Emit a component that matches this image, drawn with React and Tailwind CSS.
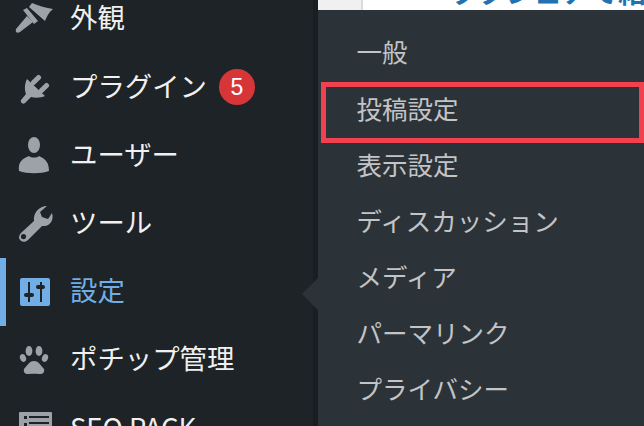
const items = [
  { label: "外観", icon: "brush" },
  { label: "プラグイン", icon: "plug", badge: "5" },
  { label: "ユーザー", icon: "user" },
  { label: "ツール", icon: "wrench" },
  { label: "設定", icon: "settings", active: true },
  { label: "ポチップ管理", icon: "paw" },
  { label: "SEO PACK", icon: "seo" },
];
const sub = ["一般", "投稿設定", "表示設定", "ディスカッション", "メディア", "パーマリンク", "プライバシー"];

function Icon({ name }) {
  const c = "#9ca2a7";
  const common = { width: 40, height: 40, viewBox: "0 0 40 40" };
  if (name === "brush")
    return (
      <svg {...common}>
        <path fill={c} d="M15 8 L18 4 C25 7 32 9 39 10 C35 13 33 17 31 22 Z" />
        <path fill={c} d="M9 11 L13 9 L24 22 L20 25 Z" />
        <path fill={c} d="M13 17 L19 23 L6 33 C3 35 1 33 2 30 Z" />
      </svg>
    );
  if (name === "plug")
    return (
      <svg {...common}>
        <path fill={c} d="M13 12 L31 29 C27 31 21 31 17 30 L11 36 C9 38 6 35 7 33 L12 27 C10 22 11 16 13 12 Z" />
        <rect x="-2.5" y="-6" width="5" height="12" rx="2" fill={c} transform="translate(22 13) rotate(45)" />
        <rect x="-2.5" y="-6" width="5" height="12" rx="2" fill={c} transform="translate(30 21) rotate(45)" />
      </svg>
    );
  if (name === "user")
    return (
      <svg {...common}>
        <ellipse cx="20" cy="10" rx="6" ry="8" fill={c} />
        <path fill={c} d="M5 36 C4 28 7 24 15 21 C17 23 23 23 25 21 C32 24 35 28 35 36 C27 39 13 39 5 36 Z" />
      </svg>
    );
  if (name === "wrench")
    return (
      <svg {...common}>
        <path fill={c} fillRule="evenodd" d="M33 2 L26 8 L28 13 L34 15 L38 9 C40 15 37 21 31 22 L28 22 L14 36 C11 39 6 38 5 34 C5 31 6 30 8 28 L20 17 C19 9 25 2 33 2 Z M9.5 30 A2.6 2.6 0 1 0 9.5 35.2 A2.6 2.6 0 1 0 9.5 30 Z" />
      </svg>
    );
  if (name === "settings")
    return (
      <svg {...common}>
        <rect x="6" y="6" width="30" height="28" rx="2" fill="#72aee6" />
        <g fill="#1d2327">
          <rect x="14" y="10" width="2" height="20" />
          <rect x="10" y="21" width="10" height="4" rx="2" />
          <rect x="26" y="10" width="2" height="20" />
          <rect x="22" y="13" width="9" height="4" rx="2" />
        </g>
      </svg>
    );
  if (name === "paw")
    return (
      <svg {...common}>
        <g fill={c}>
          <ellipse cx="9" cy="18" rx="3" ry="4" transform="rotate(-20 9 18)" />
          <ellipse cx="15" cy="11" rx="3.4" ry="5" />
          <ellipse cx="25" cy="11" rx="3.4" ry="5" />
          <ellipse cx="31" cy="18" rx="3" ry="4" transform="rotate(20 31 18)" />
          <path d="M20 21 C25 21 27 26 30 29 C31 33 28 34.5 25 34 C22 33.5 18 33.5 15 34 C12 34.5 9 33 10 29 C13 26 15 21 20 21 Z" />
        </g>
      </svg>
    );
  return (
    <svg {...common}>
      <path fill={c} d="M6 4 H37 A1.5 1.5 0 0 1 38 6 V38 H5 V6 A1.5 1.5 0 0 1 6 4 Z" />
      <g fill="#1d2327">
        <rect x="10" y="8" width="3" height="3" />
        <rect x="15" y="8" width="20" height="2" />
        <rect x="15" y="14" width="20" height="2" />
        <rect x="10" y="15" width="3" height="3" />
      </g>
    </svg>
  );
}

export default function App() {
  return (
    <div className="relative flex h-[426px] w-[644px] overflow-hidden bg-white font-['Noto_Sans_CJK_JP',sans-serif]">
      <aside className="flex h-full w-[318px] shrink-0 bg-[#1d2327]">
        <div className="-mt-[15px] min-w-0 flex-1">
          {items.map((it) => (
            <div
              key={it.label}
              className={`relative flex h-[68.2px] items-center pl-[14px] text-[27.4px] ${it.active ? "text-[#72aee6]" : "text-[#f0f0f1]"}`}
            >
              {it.active && <span className="absolute left-0 top-0 h-full w-[6px] bg-[#72aee6]" />}
              <span className="flex h-[40px] w-[40px] shrink-0 items-center justify-center">
                <Icon name={it.icon} />
              </span>
              <span className="mb-[4px] ml-[16px] whitespace-nowrap leading-none">{it.label}</span>
              {it.badge && (
                <span className="ml-[12px] flex h-[36px] w-[36px] items-center justify-center rounded-full bg-[#d63638] font-['Liberation_Sans',sans-serif] text-[23px] font-normal leading-none text-white">
                  {it.badge}
                </span>
              )}
            </div>
          ))}
        </div>
        <div className="h-full w-[5px] shrink-0 bg-[#191e22]" />
      </aside>
      <main className="flex min-w-0 flex-1 flex-col">
        <div className="flex h-[10px] shrink-0 overflow-hidden bg-white">
          <div className="h-full w-[45px] shrink-0 border-r-2 border-[#dcdcde] bg-[#f0f0f1]" />
          <div className="-mt-[27px] ml-[88px] whitespace-nowrap text-[28px] font-bold leading-[36px] text-[#2271b1]">ククシェアで紹介</div>
        </div>
        <nav className="relative flex flex-1 flex-col bg-[#2c3338] pt-[13px]">
          <span className="absolute -left-[16px] top-[268px] h-0 w-0 border-y-[16px] border-r-[16px] border-y-transparent border-r-[#2c3338]" />
          {sub.map((s) => (
            <div key={s} className="flex h-[56.2px] items-center pl-[38.5px] text-[25.5px] leading-none text-[#c3c4c7]">
              {s}
            </div>
          ))}
        </nav>
      </main>
      <div className="absolute left-[321px] top-[82px] h-[61px] w-[323px] border-[5px] border-[#f2404f]" />
    </div>
  );
}
